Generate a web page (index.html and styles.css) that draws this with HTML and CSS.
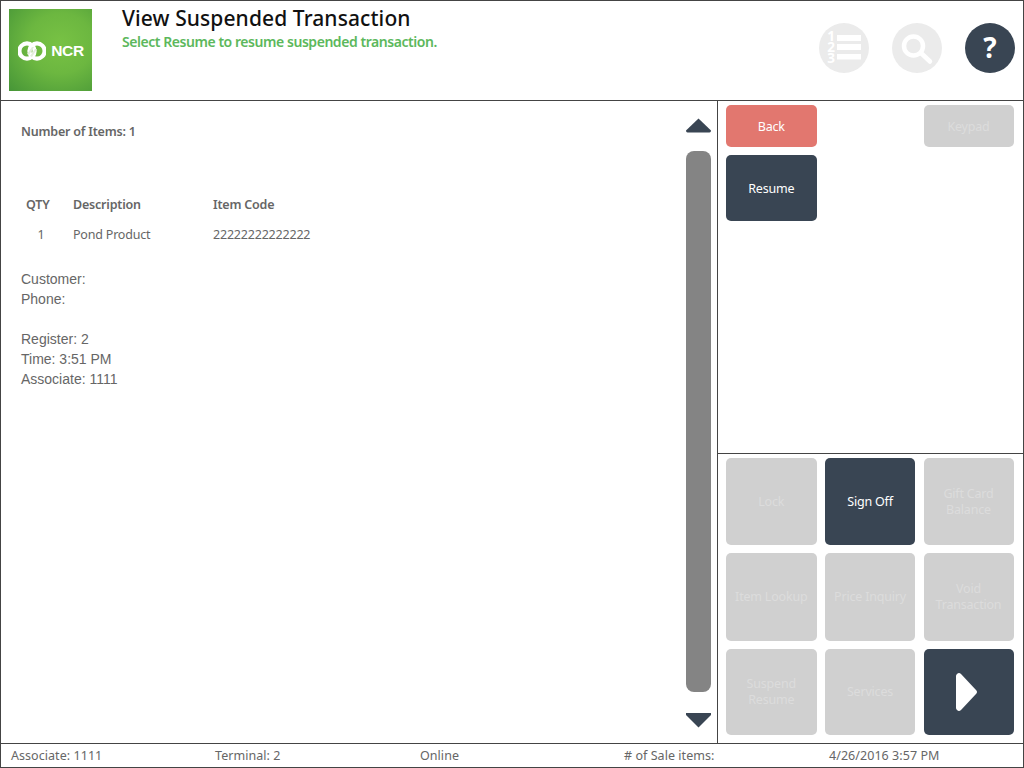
FILE: index.html
```html
<!DOCTYPE html>
<html lang="en">
<head>
<meta charset="utf-8">
<title>View Suspended Transaction</title>
<link rel="stylesheet" href="styles.css">
</head>
<body>
<div class="app">
  <header class="header">
    <div class="logo">
      <svg class="logo-mark" viewBox="0 0 28 20" width="28" height="20" aria-hidden="true">
        <circle cx="9" cy="10" r="7.6" fill="none" stroke="#fff" stroke-width="4.2"/>
        <circle cx="19" cy="10" r="7.6" fill="none" stroke="#fff" stroke-width="4.2"/>
        <path d="M9 13 L14 6 L16 6 L11 14 Z M12 15 L17 8 L19 8 L14 16 Z" fill="#e4eedd"/>
      </svg>
      <span class="logo-text">NCR</span>
    </div>
    <div class="titles">
      <h1 class="title">View Suspended Transaction</h1>
      <p class="subtitle">Select Resume to resume suspended transaction.</p>
    </div>
    <div class="head-icons">
      <div class="round round-muted">
        <svg viewBox="0 0 50 50" width="50" height="50" aria-hidden="true">
          <rect x="18" y="12" width="24" height="6" fill="#fff"/>
          <rect x="18" y="21" width="24" height="6" fill="#fff"/>
          <rect x="18" y="31" width="24" height="5.5" fill="#fff"/>
          <text x="12" y="17.5" class="nums">1</text>
          <text x="12" y="29" class="nums">2</text>
          <text x="12" y="40" class="nums">3</text>
        </svg>
      </div>
      <div class="round round-muted">
        <svg viewBox="0 0 50 50" width="50" height="50" aria-hidden="true">
          <circle cx="21.5" cy="23" r="9.5" fill="none" stroke="#fff" stroke-width="4.5"/>
          <path d="M29 30 L38 38.5" stroke="#fff" stroke-width="4.5" stroke-linecap="round"/>
        </svg>
      </div>
      <div class="round round-dark">?</div>
    </div>
  </header>

  <div class="main">
    <section class="content">
      <div class="details">
        <div class="count">Number of Items: 1</div>
        <div class="items">
          <div class="cell qty-head">QTY</div>
          <div class="cell head">Description</div>
          <div class="cell head">Item Code</div>
          <div class="cell qty">1</div>
          <div class="cell">Pond Product</div>
          <div class="cell">22222222222222</div>
        </div>
        <div class="info">
          <div>Customer:</div>
          <div>Phone:</div>
          <div class="gap-line">Register: 2</div>
          <div>Time: 3:51 PM</div>
          <div>Associate: 1111</div>
        </div>
      </div>
      <div class="scroller">
        <svg class="arrow" viewBox="0 0 25 15" width="25" height="15" aria-hidden="true"><path d="M12.5 0.5 L25 12.5 Q25 14.5 23.5 14.5 L1.5 14.5 Q0 14.5 0 12.5 Z" fill="#394553"/></svg>
        <div class="thumb"></div>
        <svg class="arrow" viewBox="0 0 25 15" width="25" height="15" aria-hidden="true"><path d="M0 0 L25 0 L25 2 L12.5 14.5 L0 2 Z" fill="#394553"/></svg>
      </div>
    </section>

    <aside class="side">
      <div class="side-top">
        <button class="btn btn-back">Back</button>
        <span></span>
        <button class="btn btn-off">Keypad</button>
        <button class="btn btn-dark">Resume</button>
      </div>
      <div class="side-bottom">
        <button class="btn btn-off">Lock</button>
        <button class="btn btn-dark">Sign Off</button>
        <button class="btn btn-off">Gift Card<br>Balance</button>
        <button class="btn btn-off">Item Lookup</button>
        <button class="btn btn-off">Price Inquiry</button>
        <button class="btn btn-off">Void<br>Transaction</button>
        <button class="btn btn-off">Suspend<br>Resume</button>
        <button class="btn btn-off">Services</button>
        <button class="btn btn-dark btn-next" aria-label="Next">
          <svg viewBox="0 0 24 40" width="24" height="40" aria-hidden="true"><path d="M3 2 Q5 0 7 2 L22 18 Q24 20 22 22 L7 38 Q5 40 3 38 Q2 37 2 36 L2 4 Q2 3 3 2 Z" fill="#fff"/></svg>
        </button>
      </div>
    </aside>
  </div>

  <footer class="footer">
    <span class="f1">Associate: 1111</span>
    <span class="f2">Terminal: 2</span>
    <span class="f3">Online</span>
    <span class="f4"># of Sale items:</span>
    <span class="f5">4/26/2016 3:57 PM</span>
  </footer>
</div>
</body>
</html>
```
FILE: styles.css
```css
* { box-sizing: border-box; }
html, body { margin: 0; padding: 0; }
body {
  width: 1024px;
  height: 768px;
  overflow: hidden;
  background: #fff;
  font-family: "Noto Sans", "Open Sans", sans-serif;
}
.app {
  width: 1024px;
  height: 768px;
  border: 1px solid #444;
  display: flex;
  flex-direction: column;
}
.header {
  height: 99px;
  flex: none;
  display: flex;
  padding: 8px 8px 0 8px;
}
.logo {
  width: 83px;
  height: 82px;
  flex: none;
  display: flex;
  align-items: center;
  justify-content: center;
  gap: 5px;
  padding: 1px 0 0 1px;
  background: radial-gradient(ellipse at 62% 42%, #78c244 0%, #6cb740 45%, #469537 100%);
}
.logo-mark { flex: none; }
.logo-text {
  font-family: "Liberation Sans", sans-serif;
  font-weight: 700;
  font-size: 15.5px;
  color: #fff;
  letter-spacing: -0.3px;
}
.titles { margin-left: 30px; flex: 1; }
.title {
  margin: 0;
  font-size: 21px;
  line-height: 18px;
  font-weight: 500;
  color: #111;
  letter-spacing: 0.1px;
}
.subtitle {
  margin: 5px 0 0;
  font-size: 14px;
  line-height: 20px;
  font-weight: 600;
  color: #5cb85c;
  letter-spacing: -0.45px;
}
.head-icons {
  display: flex;
  gap: 23px;
  padding-top: 14px;
}
.round {
  width: 50px;
  height: 50px;
  border-radius: 50%;
  display: flex;
  align-items: center;
  justify-content: center;
}
.round-muted { background: #ebebeb; }
.round-dark {
  background: #394553;
  color: #fff;
  font-size: 28px;
  font-weight: 700;
  padding-bottom: 3px;
}
.nums { font-size: 13.5px; font-weight: 700; fill: #fff; text-anchor: middle; }
.main {
  flex: 1;
  display: flex;
  min-height: 0;
  border-top: 1px solid #444;
  border-bottom: 1px solid #444;
}
.content {
  width: 717px;
  flex: none;
  display: flex;
  border-right: 1px solid #444;
}
.details { flex: 1; padding: 21px 0 0 20px; color: #666; }
.count {
  font-size: 12.5px;
  line-height: 20px;
  font-weight: 600;
  color: #666;
  letter-spacing: -0.2px;
}
.items {
  display: grid;
  grid-template-columns: 52px 140px 1fr;
  margin-top: 48px;
  grid-auto-rows: 30px;
  align-items: center;
  font-size: 12.5px;
  letter-spacing: -0.2px;
  color: #666;
}
.cell { line-height: 20px; }
.head { font-weight: 600; }
.qty-head { font-weight: 600; padding-left: 5px; }
.qty { text-align: center; padding-right: 12px; }
.info {
  margin-top: 19px;
  font-family: "Liberation Sans", Arial, sans-serif;
  font-size: 14px;
  line-height: 20px;
  color: #666;
}
.gap-line { margin-top: 20px; }
.scroller {
  width: 31px;
  flex: none;
  padding: 17px 0 15px 0;
  display: flex;
  flex-direction: column;
  align-items: flex-start;
}
.arrow { flex: none; display: block; }
.thumb {
  width: 25px;
  flex: 1;
  margin: 18px 0 21px;
  background: #848484;
  border-radius: 8px;
}
.side {
  flex: 1;
  display: flex;
  flex-direction: column;
  min-width: 0;
}
.side-top {
  height: 353px;
  flex: none;
  display: grid;
  grid-template-columns: 90.5px 90px 90px;
  grid-template-rows: 42px 66px;
  column-gap: 8.5px;
  row-gap: 8px;
  padding: 4px 0 0 8px;
  border-bottom: 1px solid #444;
  align-content: start;
}
.side-bottom {
  flex: 1;
  display: grid;
  grid-template-columns: 90.5px 90px 90px;
  grid-template-rows: 87px 87.5px 86px;
  column-gap: 8.5px;
  row-gap: 8px;
  padding: 4px 0 0 8px;
  align-content: start;
}
.btn {
  border: 0;
  margin: 0;
  padding: 2px 0 0;
  border-radius: 5px;
  font-family: "Noto Sans", "Open Sans", sans-serif;
  font-size: 12.5px;
  line-height: 16px;
  letter-spacing: -0.2px;
  color: #fff;
  display: flex;
  align-items: center;
  justify-content: center;
  text-align: center;
}
.side-bottom .btn { padding-top: 1px; }
.btn-back { background: #e2776f; }
.btn-dark { background: #394553; }
.btn-off { background: #d0d0d0; color: #dcdcdc; }
.side-bottom .btn-next { padding: 0 5px 0 0; }
.footer {
  height: 23px;
  flex: none;
  display: grid;
  grid-template-columns: 204px 205px 204px 205px 1fr;
  padding-left: 10px;
  align-items: center;
  font-size: 12.5px;
  letter-spacing: 0.05px;
  color: #666;
}
```
